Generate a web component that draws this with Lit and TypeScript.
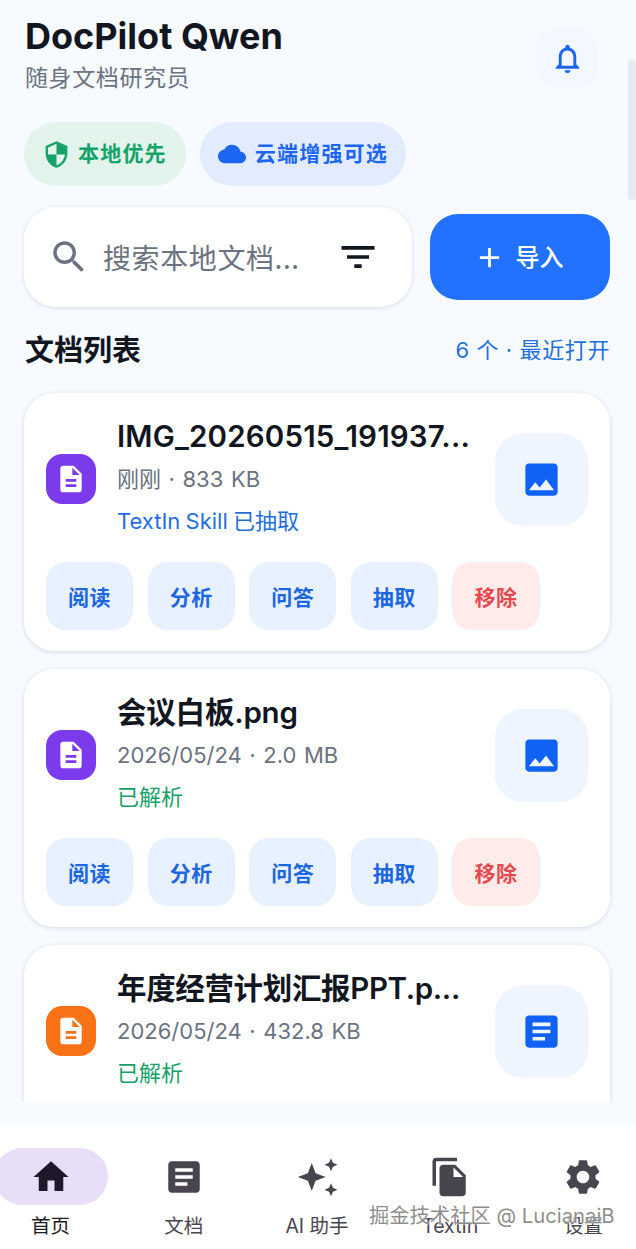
import { LitElement, html, css, svg } from "lit";
import { customElement } from "lit/decorators.js";

const P = {
  bell: "M12 22c1.1 0 2-.9 2-2h-4c0 1.1.89 2 2 2zm6-6v-5c0-3.07-1.64-5.64-4.5-6.32V4c0-.83-.67-1.5-1.5-1.5s-1.5.67-1.5 1.5v.68C7.63 5.36 6 7.92 6 11v5l-2 2v1h16v-1l-2-2zm-2 1H8v-6c0-2.48 1.51-4.5 4-4.5s4 2.02 4 4.5v6z",
  shield: "M12 1L3 5v6c0 5.55 3.84 10.74 9 12 5.16-1.26 9-6.45 9-12V5l-9-4zm0 10.99h7c-.53 4.12-3.28 7.79-7 8.94V12H5V6.3l7-3.11v8.8z",
  cloud: "M19.35 10.04C18.67 6.59 15.64 4 12 4 9.11 4 6.6 5.64 5.35 8.04 2.34 8.36 0 10.91 0 14c0 3.31 2.69 6 6 6h13c2.76 0 5-2.24 5-5 0-2.64-2.05-4.78-4.65-4.96z",
  search: "M15.5 14h-.79l-.28-.27C15.41 12.59 16 11.11 16 9.5 16 5.91 13.09 3 9.5 3S3 5.91 3 9.5 5.91 16 9.5 16c1.61 0 3.09-.59 4.23-1.57l.27.28v.79l5 4.99L20.49 19l-4.99-5zm-6 0C7.01 14 5 11.99 5 9.5S7.01 5 9.5 5 14 7.01 14 9.5 11.99 14 9.5 14z",
  filter: "M10 18h4v-2h-4v2zM3 6v2h18V6H3zm3 7h12v-2H6v2z",
  add: "M19 13h-6v6h-2v-6H5v-2h6V5h2v6h6v2z",
  file: "M14 2H6c-1.1 0-1.99.9-1.99 2L4 20c0 1.1.89 2 1.99 2H18c1.1 0 2-.9 2-2V8l-6-6zm2 16H8v-2h8v2zm0-4H8v-2h8v2zm-3-5V3.5L18.5 9H13z",
  image: "M21 19V5c0-1.1-.9-2-2-2H5c-1.1 0-2 .9-2 2v14c0 1.1.9 2 2 2h14c1.1 0 2-.9 2-2zM8.5 13.5l2.5 3.01L14.5 12l4.5 6H5l3.5-4.5z",
  article: "M19 3H5c-1.1 0-2 .9-2 2v14c0 1.1.9 2 2 2h14c1.1 0 2-.9 2-2V5c0-1.1-.9-2-2-2zm-5 14H7v-2h7v2zm3-4H7v-2h10v2zm0-4H7V7h10v2z",
  home: "M10 20v-6h4v6h5v-8h3L12 3 2 12h3v8z",
  sparkle: "M9 4L11.2 9.8 17 12 11.2 14.2 9 20 6.8 14.2 1 12 6.8 9.8zM20 1.3L21.1 3.9 23.7 5 21.1 6.1 20 8.7 18.9 6.1 16.3 5 18.9 3.9zM20 15.6L21.1 18.2 23.7 19.3 21.1 20.4 20 23 18.9 20.4 16.3 19.3 18.9 18.2z",
  copy: "M16 1H4c-1.1 0-2 .9-2 2v14h2V3h12V1zm-1 4H8c-1.1 0-1.99.9-1.99 2L6 21c0 1.1.89 2 1.99 2H19c1.1 0 2-.9 2-2V11l-6-6zm-1 7V6.5l5.5 5.5H14z",
  gear: "M19.14 12.94c.04-.3.06-.61.06-.94 0-.32-.02-.64-.07-.94l2.03-1.58c.18-.14.23-.41.12-.61l-1.92-3.32c-.12-.22-.37-.29-.59-.22l-2.39.96c-.5-.38-1.03-.7-1.62-.94l-.36-2.54c-.04-.24-.24-.41-.48-.41h-3.84c-.24 0-.43.17-.47.41l-.36 2.54c-.59.24-1.13.57-1.62.94l-2.39-.96c-.22-.08-.47 0-.59.22L2.74 8.87c-.12.21-.08.47.12.61l2.03 1.58c-.05.3-.09.63-.09.94s.02.64.07.94l-2.03 1.58c-.18.14-.23.41-.12.61l1.92 3.32c.12.22.37.29.59.22l2.39-.96c.5.38 1.03.7 1.62.94l.36 2.54c.05.24.24.41.48.41h3.84c.24 0 .44-.17.47-.41l.36-2.54c.59-.24 1.13-.56 1.62-.94l2.39.96c.22.08.47 0 .59-.22l1.92-3.32c.12-.22.07-.47-.12-.61l-2.01-1.58zM12 15.6c-1.98 0-3.6-1.62-3.6-3.6s1.62-3.6 3.6-3.6 3.6 1.62 3.6 3.6-1.62 3.6-3.6 3.6z",
};

const icon = (d: string, size: number, color = "currentColor") =>
  html`<svg width=${size} height=${size} viewBox="0 0 24 24" fill=${color}>${svg`<path d=${d}></path>`}</svg>`;

const docs = [
  { name: "IMG_20260515_191937...", spacing: 0.18, meta: "刚刚 · 833 KB", status: "TextIn Skill 已抽取", statusColor: "#1f6fdc", tile: "#7c3aed", thumb: P.image },
  { name: "会议白板.png", spacing: -0.2, meta: "2026/05/24 · 2.0 MB", status: "已解析", statusColor: "#16a06a", tile: "#7c3aed", thumb: P.image },
  { name: "年度经营计划汇报PPT.p...", spacing: -0.35, meta: "2026/05/24 · 432.8 KB", status: "已解析", statusColor: "#16a06a", tile: "#f97316", thumb: P.article },
];

const tabs = [
  { label: "首页", d: P.home, active: true },
  { label: "文档", d: P.article },
  { label: "AI 助手", d: P.sparkle },
  { label: "TextIn", d: P.copy },
  { label: "设置", d: P.gear },
];

@customElement("app-root")
export class AppRoot extends LitElement {
  static styles = css`
    :host {
      display: flex;
      flex-direction: column;
      position: relative;
      width: 636px;
      height: 1249px;
      overflow: hidden;
      background: #f7faff;
      font-family: Inter, "Noto Sans CJK SC", sans-serif;
      color: #11161f;
    }
    svg {
      display: block;
      flex: none;
    }

    .scroll {
      height: 1102px;
      flex: none;
      overflow: hidden;
      padding: 16px 26px 0 24px;
      box-sizing: border-box;
    }
    .header {
      display: flex;
      justify-content: space-between;
    }
    .title {
      font-size: 36px;
      line-height: 40px;
      font-weight: 700;
      margin-left: 1px;
    }
    .subtitle {
      font-size: 23px;
      line-height: 34px;
      margin: 5px 0 0 1px;
      color: #6b7280;
      letter-spacing: 0.6px;
    }
    .bell {
      width: 62px;
      height: 62px;
      margin: 11px 12px 0 0;
      border-radius: 24px;
      background: #f3f7ff;
      color: #1c66f2;
      display: flex;
      align-items: center;
      justify-content: center;
    }

    .chips {
      display: flex;
      gap: 14px;
      margin-top: 27px;
    }
    .chip {
      height: 64px;
      border-radius: 32px;
      display: flex;
      align-items: center;
      gap: 7px;
      padding: 0 19px 0 18px;
      font-family: "Noto Sans CJK SC", sans-serif;
      font-size: 21px;
      letter-spacing: 1.2px;
      font-weight: 600;
    }
    .chip span,
    .import span {
      margin-bottom: 4px;
    }
    .chip.green {
      background: #e2f4ec;
      color: #16a36a;
    }
    .chip.blue {
      background: #e3ecff;
      color: #1c66f2;
      gap: 9px;
      padding-right: 18px;
    }

    .tools {
      display: flex;
      align-items: center;
      gap: 18px;
      margin-top: 21px;
    }
    .search {
      width: 388px;
      height: 100px;
      box-sizing: border-box;
      border-radius: 32px;
      background: #fff;
      box-shadow: 0 1px 4px rgba(30, 50, 90, 0.14);
      display: flex;
      align-items: center;
      padding: 0 32px 0 24px;
      color: #6b7280;
    }
    .placeholder {
      flex: 1;
      font-family: "Noto Sans CJK SC", sans-serif;
      font-size: 28px;
      letter-spacing: 0.6px;
      margin-left: 13px;
      white-space: nowrap;
    }
    .filter {
      color: #11161f;
    }
    .import {
      width: 180px;
      height: 86px;
      box-sizing: border-box;
      padding-right: 4px;
      border-radius: 28px;
      background: #2272ff;
      color: #fff;
      display: flex;
      align-items: center;
      justify-content: center;
      gap: 10px;
      font-family: "Noto Sans CJK SC", sans-serif;
      font-size: 24px;
      font-weight: 500;
    }

    .section {
      display: flex;
      align-items: center;
      justify-content: space-between;
      height: 40px;
      margin-top: 21px;
    }
    .section h2 {
      margin: 0 0 0 1px;
      font-size: 29px;
      font-weight: 700;
    }
    .section span {
      font-size: 22px;
      letter-spacing: 0.6px;
      color: #1f6fdc;
    }

    .cards {
      display: flex;
      flex-direction: column;
      gap: 18px;
      margin-top: 25px;
    }
    .card {
      width: 586px;
      height: 258px;
      flex: none;
      box-sizing: border-box;
      padding: 22px 22px 21px;
      border-radius: 30px;
      background: #fff;
      box-shadow: 0 1px 4px rgba(30, 50, 90, 0.16);
    }
    .row {
      display: flex;
      align-items: center;
      height: 128px;
    }
    .tile {
      width: 50px;
      height: 50px;
      border-radius: 16px;
      display: flex;
      align-items: center;
      justify-content: center;
    }
    .info {
      flex: 1;
      min-width: 0;
      margin-left: 21px;
      white-space: nowrap;
    }
    .info > div {
      height: 42.7px;
      line-height: 42.7px;
    }
    .name {
      font-size: 29.5px;
      font-weight: 600;
    }
    .meta {
      font-size: 22px;
      word-spacing: 1.4px;
      color: #6b7280;
    }
    .status {
      font-size: 22px;
      word-spacing: -1px;
    }
    .thumb {
      width: 93px;
      height: 93px;
      border-radius: 28px;
      background: #eef5ff;
      color: #1062f5;
      display: flex;
      align-items: center;
      justify-content: center;
    }
    .actions {
      display: flex;
      gap: 14.4px;
      margin-top: 19px;
    }
    .actions button {
      all: unset;
      width: 87.2px;
      height: 68px;
      border-radius: 20px;
      background: #e8f1ff;
      color: #1c66e0;
      font-family: "Noto Sans CJK SC", sans-serif;
      font-size: 21px;
      letter-spacing: 0.5px;
      font-weight: 600;
      text-align: center;
      line-height: 64px;
    }
    .actions button.danger {
      background: #ffecea;
      color: #e5484d;
    }

    .nav {
      flex: none;
      height: 123px;
      margin: 24px -14px 0 -16px;
      background: #fff;
      display: grid;
      grid-template-columns: repeat(5, 1fr);
    }
    .tab {
      display: flex;
      flex-direction: column;
      align-items: center;
      color: #49454f;
      font-size: 19.5px;
    }
    .pill {
      width: 114px;
      height: 57px;
      margin-top: 22px;
      border-radius: 29px;
      display: flex;
      align-items: center;
      justify-content: center;
    }
    .tab.active .pill {
      background: #e8def8;
      color: #1d192b;
    }
    .tab.active {
      color: #1d1b20;
    }
    .label {
      margin-top: 7px;
      line-height: 28px;
    }

    .scrollbar {
      position: absolute;
      right: 0;
      top: 60px;
      width: 8px;
      height: 140px;
      border-radius: 4px;
      background: #e6e9ef;
    }
    .watermark {
      position: absolute;
      left: 369px;
      top: 1201px;
      font-size: 20.3px;
      line-height: 30px;
      white-space: nowrap;
      color: rgba(120, 120, 120, 0.85);
      text-shadow: 0 0 2px #fff, 0 0 2px #fff;
    }
  `;

  renderCard(d: (typeof docs)[number]) {
    return html`<div class="card">
      <div class="row">
        <div class="tile" style="background: ${d.tile}">${icon(P.file, 32, "#fff")}</div>
        <div class="info">
          <div class="name" style="letter-spacing: ${d.spacing}px">${d.name}</div>
          <div class="meta">${d.meta}</div>
          <div class="status" style="color: ${d.statusColor}">${d.status}</div>
        </div>
        <div class="thumb">${icon(d.thumb, 43)}</div>
      </div>
      <div class="actions">
        <button>阅读</button>
        <button>分析</button>
        <button>问答</button>
        <button>抽取</button>
        <button class="danger">移除</button>
      </div>
    </div>`;
  }

  render() {
    return html`
      <div class="scroll">
        <div class="header">
          <div>
            <div class="title">DocPilot Qwen</div>
            <div class="subtitle">随身文档研究员</div>
          </div>
          <div class="bell">${icon(P.bell, 35)}</div>
        </div>
        <div class="chips">
          <div class="chip green">${icon(P.shield, 29)}<span>本地优先</span></div>
          <div class="chip blue">${icon(P.cloud, 28)}<span>云端增强可选</span></div>
        </div>
        <div class="tools">
          <div class="search">
            ${icon(P.search, 42)}
            <div class="placeholder">搜索本地文档...</div>
            <div class="filter">${icon(P.filter, 44)}</div>
          </div>
          <div class="import">${icon(P.add, 33)}<span>导入</span></div>
        </div>
        <div class="section">
          <h2>文档列表</h2>
          <span>6 个 · 最近打开</span>
        </div>
        <div class="cards">${docs.map((d) => this.renderCard(d))}</div>
      </div>
      <nav class="nav">
        ${tabs.map(
          (t) => html`<div class="tab ${t.active ? "active" : ""}">
            <div class="pill">${icon(t.d, 42)}</div>
            <div class="label">${t.label}</div>
          </div>`
        )}
      </nav>
      <div class="scrollbar"></div>
      <div class="watermark">掘金技术社区 @ LucianaiB</div>
    `;
  }
}
